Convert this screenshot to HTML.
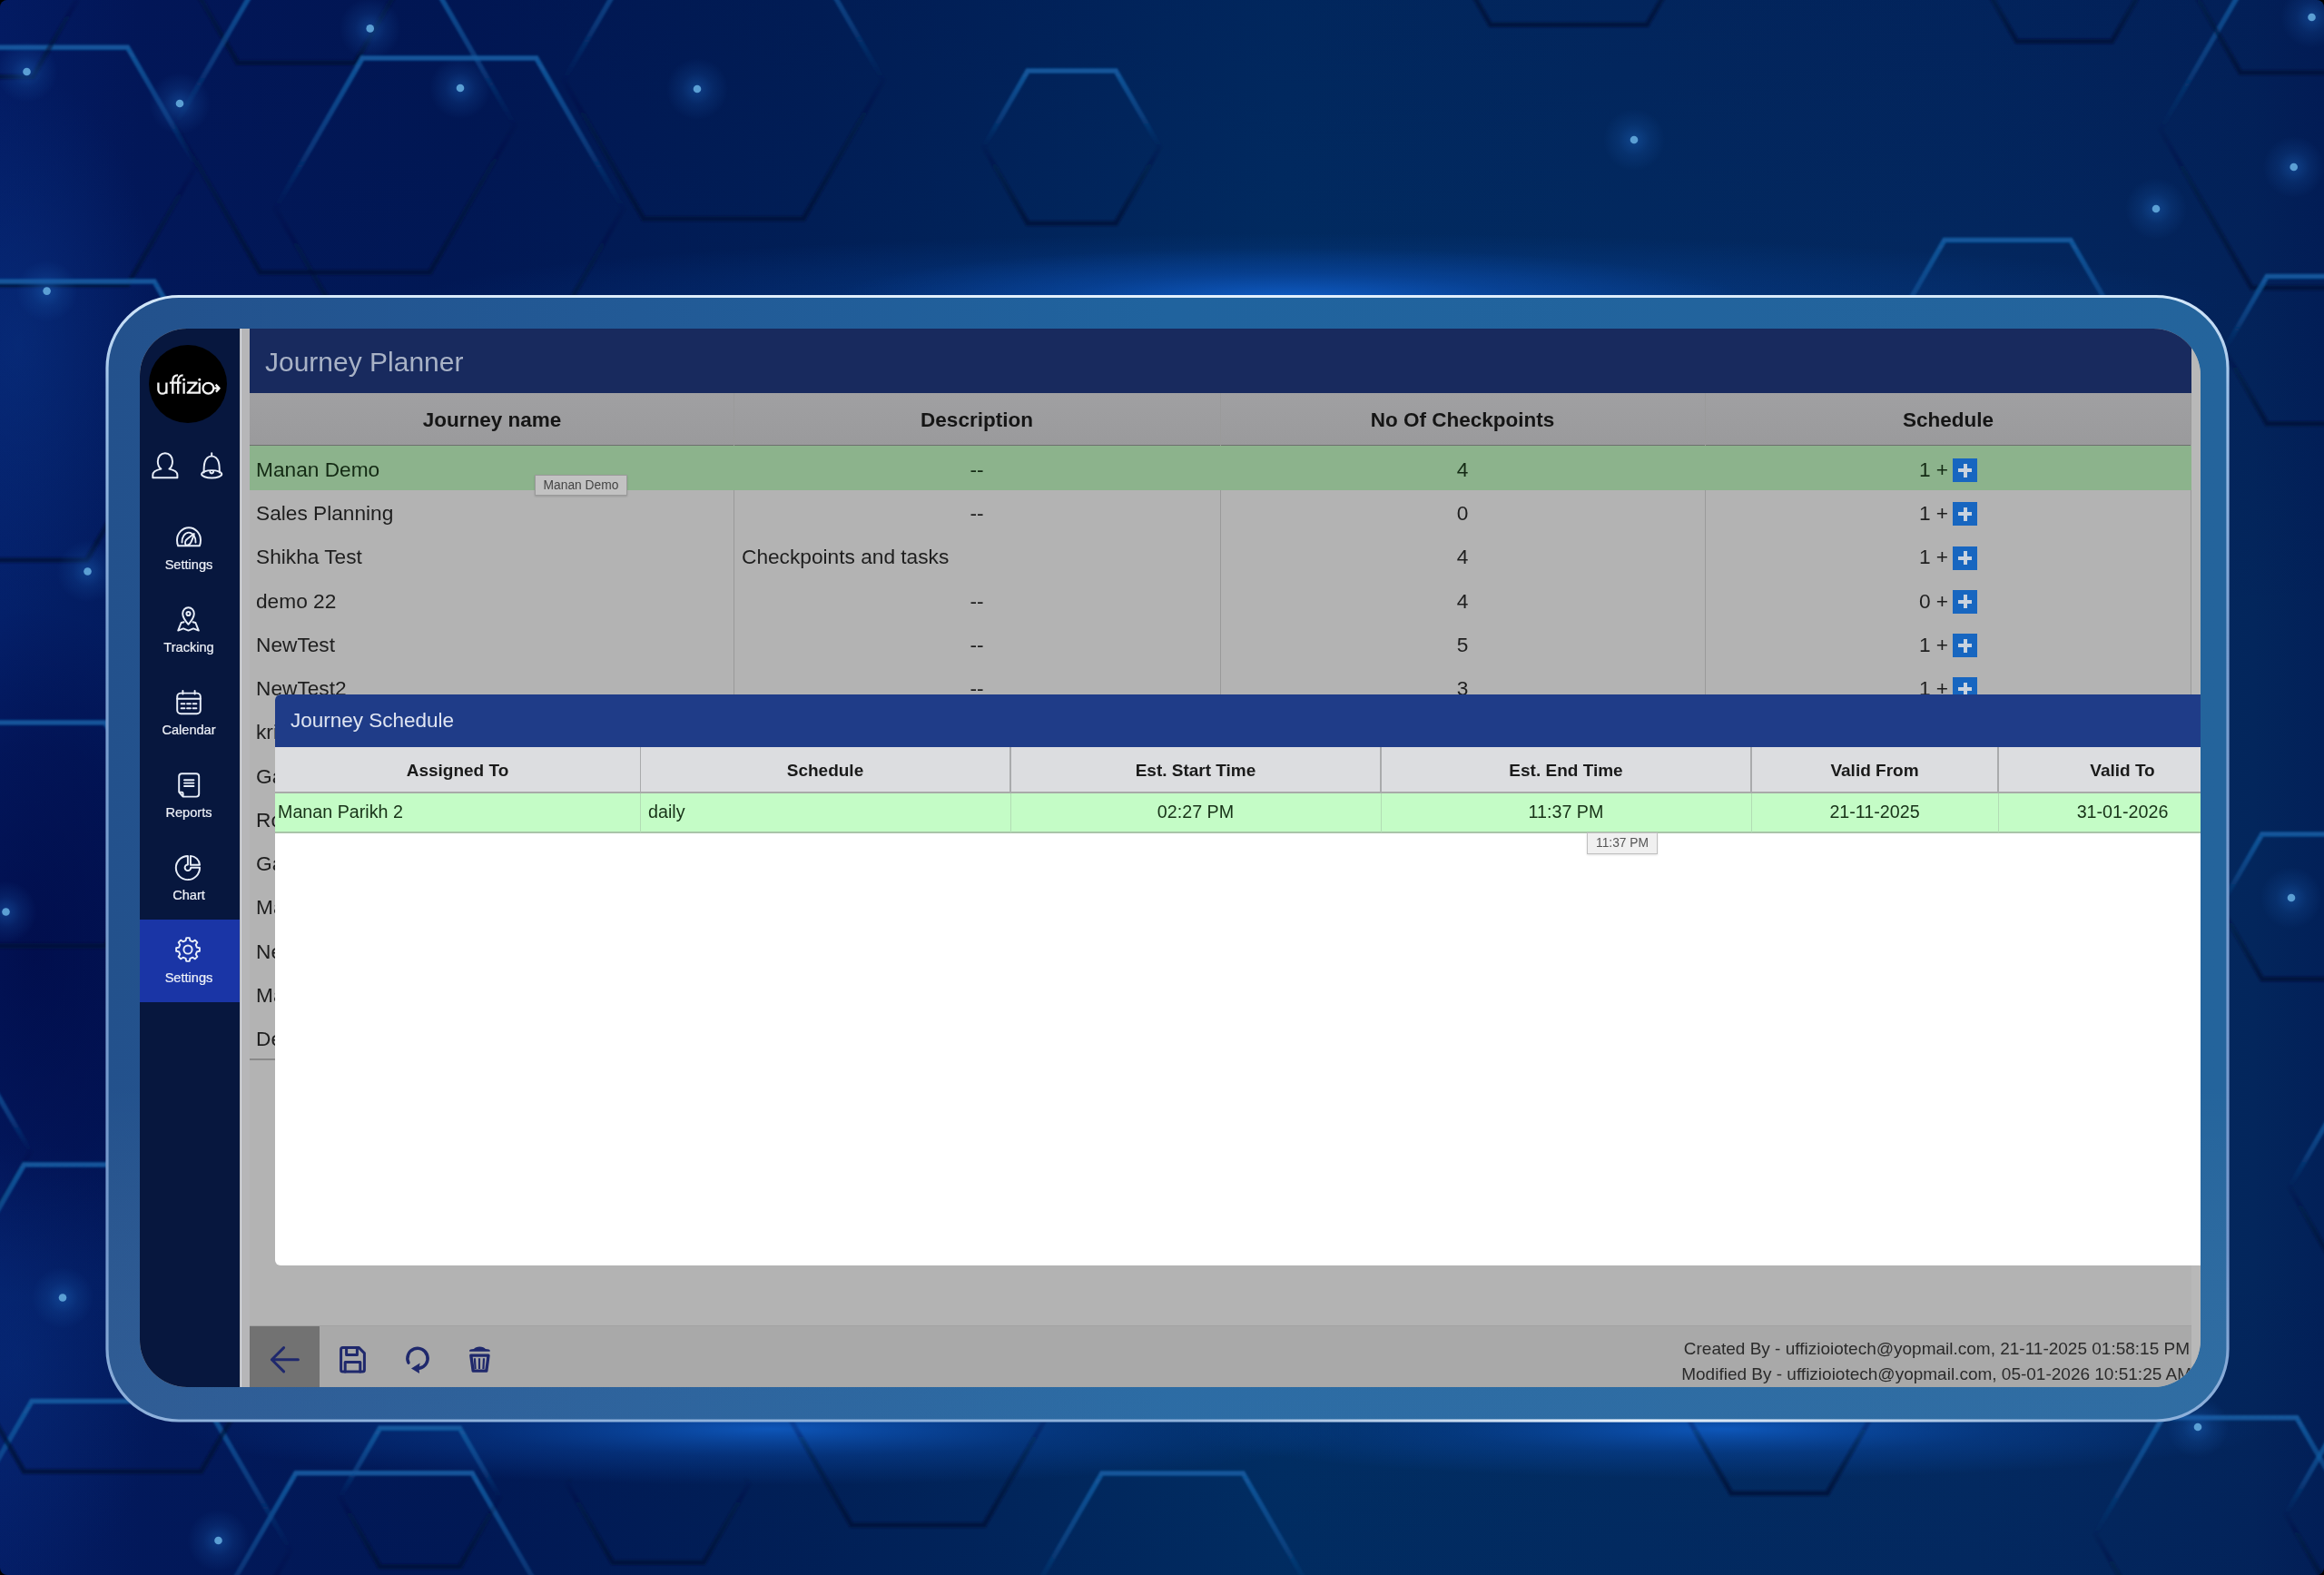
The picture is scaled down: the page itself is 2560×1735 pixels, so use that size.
<!DOCTYPE html>
<html><head><meta charset="utf-8"><title>Journey Planner</title>
<style>
html,body{margin:0;padding:0;width:2560px;height:1735px;overflow:hidden;background:#000;}
body{font-family:"Liberation Sans", sans-serif;position:relative;}
#page{position:absolute;left:0;top:0;width:2560px;height:1735px;overflow:hidden;border-radius:8px;}
.t{position:absolute;white-space:nowrap;line-height:1;will-change:transform;}
.r{position:absolute;}
</style></head><body><div id="page">
<svg width="2560" height="1735" viewBox="0 0 2560 1735" style="position:absolute;left:0;top:0">
<defs>
<linearGradient id="bgl" x1="0" y1="0" x2="1" y2="0">
  <stop offset="0" stop-color="#04206a"/>
  <stop offset="0.06" stop-color="#021a5c"/>
  <stop offset="0.2" stop-color="#011a56"/>
  <stop offset="0.35" stop-color="#012258"/>
  <stop offset="0.55" stop-color="#013064"/>
  <stop offset="0.85" stop-color="#032c62"/>
  <stop offset="0.97" stop-color="#03265c"/>
  <stop offset="1" stop-color="#022058"/>
</linearGradient>
<linearGradient id="bgv" x1="0" y1="0" x2="0" y2="1">
  <stop offset="0" stop-color="#000a48" stop-opacity="0.25"/>
  <stop offset="0.4" stop-color="#000a48" stop-opacity="0"/>
  <stop offset="0.8" stop-color="#000a48" stop-opacity="0"/>
  <stop offset="1" stop-color="#000a48" stop-opacity="0.12"/>
</linearGradient>
<radialGradient id="glowL" cx="0.5" cy="0.5" r="0.5">
  <stop offset="0" stop-color="#0c3f95" stop-opacity="0.35"/>
  <stop offset="1" stop-color="#0c3f95" stop-opacity="0"/>
</radialGradient>
<radialGradient id="darkL" cx="0.5" cy="0.5" r="0.5">
  <stop offset="0" stop-color="#000640" stop-opacity="0.65"/>
  <stop offset="0.6" stop-color="#000640" stop-opacity="0.4"/>
  <stop offset="1" stop-color="#000640" stop-opacity="0"/>
</radialGradient>
<radialGradient id="glowTop" cx="0.5" cy="0.5" r="0.5">
  <stop offset="0" stop-color="#0f5cc4" stop-opacity="0.95"/>
  <stop offset="0.5" stop-color="#0a4aa8" stop-opacity="0.45"/>
  <stop offset="1" stop-color="#0a4aa8" stop-opacity="0"/>
</radialGradient>
<radialGradient id="glowBot" cx="0.5" cy="0.5" r="0.5">
  <stop offset="0" stop-color="#0f5cc4" stop-opacity="0.9"/>
  <stop offset="0.5" stop-color="#0a4aa8" stop-opacity="0.4"/>
  <stop offset="1" stop-color="#0a4aa8" stop-opacity="0"/>
</radialGradient>
<linearGradient id="hexL" x1="0" y1="0" x2="0" y2="1">
  <stop offset="0" stop-color="#145ca2" stop-opacity="0.9"/>
  <stop offset="0.3" stop-color="#12569c" stop-opacity="0.5"/>
  <stop offset="0.5" stop-color="#0d3c7a" stop-opacity="0.0"/>
  <stop offset="1" stop-color="#0d3c7a" stop-opacity="0"/>
</linearGradient>
<linearGradient id="hexD" x1="0" y1="0" x2="0" y2="1">
  <stop offset="0" stop-color="#021338" stop-opacity="0"/>
  <stop offset="0.45" stop-color="#021338" stop-opacity="0"/>
  <stop offset="0.7" stop-color="#021338" stop-opacity="0.45"/>
  <stop offset="1" stop-color="#021338" stop-opacity="0.8"/>
</linearGradient>
<radialGradient id="dot" cx="0.5" cy="0.5" r="0.5">
  <stop offset="0" stop-color="#1a5cb0" stop-opacity="0.55"/>
  <stop offset="0.5" stop-color="#1a5cb0" stop-opacity="0.2"/>
  <stop offset="1" stop-color="#1a5cb0" stop-opacity="0"/>
</radialGradient>
</defs>
<rect width="2560" height="1735" fill="url(#bgl)"/>
<rect width="2560" height="1735" fill="url(#bgv)"/>
<ellipse cx="40" cy="1050" rx="220" ry="380" fill="url(#darkL)"/><ellipse cx="20" cy="380" rx="160" ry="300" fill="url(#glowL)"/><ellipse cx="20" cy="1500" rx="160" ry="250" fill="url(#glowL)" opacity="0.6"/>
<ellipse cx="1450" cy="332" rx="1000" ry="75" fill="url(#glowTop)" opacity="0.6"/><ellipse cx="1420" cy="328" rx="500" ry="55" fill="url(#glowTop)"/>
<ellipse cx="850" cy="1574" rx="650" ry="62" fill="url(#glowBot)"/><ellipse cx="1900" cy="1574" rx="600" ry="55" fill="url(#glowBot)"/>
<filter id="soft" x="-5%" y="-5%" width="110%" height="110%"><feGaussianBlur stdDeviation="0.8"/></filter>
<g filter="url(#soft)">
<polygon points="-10.5,52.2 140.5,52.2 216.0,183.0 140.5,313.8 -10.5,313.8 -86.0,183.0" fill="none" stroke="url(#hexD)" stroke-width="5.5"/>
<polygon points="-10.5,52.2 140.5,52.2 216.0,183.0 140.5,313.8 -10.5,313.8 -86.0,183.0" fill="none" stroke="url(#hexL)" stroke-width="5.5"/>
<polygon points="-64.0,-88.6 36.0,-88.6 86.0,-2.0 36.0,84.6 -64.0,84.6 -114.0,-2.0" fill="none" stroke="url(#hexD)" stroke-width="5.5"/>
<polygon points="-64.0,-88.6 36.0,-88.6 86.0,-2.0 36.0,84.6 -64.0,84.6 -114.0,-2.0" fill="none" stroke="url(#hexL)" stroke-width="5.5"/>
<polygon points="261.8,-155.2 391.2,-155.2 456.0,-43.0 391.2,69.2 261.8,69.2 197.0,-43.0" fill="none" stroke="url(#hexD)" stroke-width="5.5"/>
<polygon points="261.8,-155.2 391.2,-155.2 456.0,-43.0 391.2,69.2 261.8,69.2 197.0,-43.0" fill="none" stroke="url(#hexL)" stroke-width="5.5"/>
<polygon points="286.5,-23.9 473.5,-23.9 567.0,138.0 473.5,299.9 286.5,299.9 193.0,138.0" fill="none" stroke="url(#hexD)" stroke-width="5.5"/>
<polygon points="286.5,-23.9 473.5,-23.9 567.0,138.0 473.5,299.9 286.5,299.9 193.0,138.0" fill="none" stroke="url(#hexL)" stroke-width="5.5"/>
<polygon points="399.2,64.1 590.8,64.1 686.6,230.0 590.8,395.9 399.2,395.9 303.4,230.0" fill="none" stroke="url(#hexD)" stroke-width="5.5"/>
<polygon points="399.2,64.1 590.8,64.1 686.6,230.0 590.8,395.9 399.2,395.9 303.4,230.0" fill="none" stroke="url(#hexL)" stroke-width="5.5"/>
<polygon points="709.0,-63.8 885.0,-63.8 973.0,88.6 885.0,241.0 709.0,241.0 621.0,88.6" fill="none" stroke="url(#hexD)" stroke-width="5.5"/>
<polygon points="709.0,-63.8 885.0,-63.8 973.0,88.6 885.0,241.0 709.0,241.0 621.0,88.6" fill="none" stroke="url(#hexL)" stroke-width="5.5"/>
<polygon points="1132.1,78.0 1229.1,78.0 1277.6,162.0 1229.1,246.0 1132.1,246.0 1083.6,162.0" fill="none" stroke="url(#hexD)" stroke-width="5.5"/>
<polygon points="1132.1,78.0 1229.1,78.0 1277.6,162.0 1229.1,246.0 1132.1,246.0 1083.6,162.0" fill="none" stroke="url(#hexL)" stroke-width="5.5"/>
<polygon points="1641.8,-271.3 1814.2,-271.3 1900.4,-122.0 1814.2,27.3 1641.8,27.3 1555.6,-122.0" fill="none" stroke="url(#hexD)" stroke-width="5.5"/>
<polygon points="1641.8,-271.3 1814.2,-271.3 1900.4,-122.0 1814.2,27.3 1641.8,27.3 1555.6,-122.0" fill="none" stroke="url(#hexL)" stroke-width="5.5"/>
<polygon points="2221.7,-135.6 2326.3,-135.6 2378.6,-45.0 2326.3,45.6 2221.7,45.6 2169.4,-45.0" fill="none" stroke="url(#hexD)" stroke-width="5.5"/>
<polygon points="2221.7,-135.6 2326.3,-135.6 2378.6,-45.0 2326.3,45.6 2221.7,45.6 2169.4,-45.0" fill="none" stroke="url(#hexL)" stroke-width="5.5"/>
<polygon points="2141.9,264.6 2280.9,264.6 2350.4,385.0 2280.9,505.4 2141.9,505.4 2072.4,385.0" fill="none" stroke="url(#hexD)" stroke-width="5.5"/>
<polygon points="2141.9,264.6 2280.9,264.6 2350.4,385.0 2280.9,505.4 2141.9,505.4 2072.4,385.0" fill="none" stroke="url(#hexL)" stroke-width="5.5"/>
<polygon points="2480.5,-31.1 2681.5,-31.1 2782.0,143.0 2681.5,317.1 2480.5,317.1 2380.0,143.0" fill="none" stroke="url(#hexD)" stroke-width="5.5"/>
<polygon points="2480.5,-31.1 2681.5,-31.1 2782.0,143.0 2681.5,317.1 2480.5,317.1 2380.0,143.0" fill="none" stroke="url(#hexL)" stroke-width="5.5"/>
<polygon points="2468.0,-127.9 2588.0,-127.9 2648.0,-24.0 2588.0,79.9 2468.0,79.9 2408.0,-24.0" fill="none" stroke="url(#hexD)" stroke-width="5.5"/>
<polygon points="2468.0,-127.9 2588.0,-127.9 2648.0,-24.0 2588.0,79.9 2468.0,79.9 2408.0,-24.0" fill="none" stroke="url(#hexL)" stroke-width="5.5"/>
<polygon points="2497.2,304.5 2590.8,304.5 2637.6,385.6 2590.8,466.7 2497.2,466.7 2450.4,385.6" fill="none" stroke="url(#hexD)" stroke-width="5.5"/>
<polygon points="2497.2,304.5 2590.8,304.5 2637.6,385.6 2590.8,466.7 2497.2,466.7 2450.4,385.6" fill="none" stroke="url(#hexL)" stroke-width="5.5"/>
<polygon points="2491.8,919.0 2583.8,919.0 2629.8,998.7 2583.8,1078.4 2491.8,1078.4 2445.8,998.7" fill="none" stroke="url(#hexD)" stroke-width="5.5"/>
<polygon points="2491.8,919.0 2583.8,919.0 2629.8,998.7 2583.8,1078.4 2491.8,1078.4 2445.8,998.7" fill="none" stroke="url(#hexL)" stroke-width="5.5"/>
<polygon points="2572.0,1221.4 2672.0,1221.4 2722.0,1308.0 2672.0,1394.6 2572.0,1394.6 2522.0,1308.0" fill="none" stroke="url(#hexD)" stroke-width="5.5"/>
<polygon points="2572.0,1221.4 2672.0,1221.4 2722.0,1308.0 2672.0,1394.6 2572.0,1394.6 2522.0,1308.0" fill="none" stroke="url(#hexL)" stroke-width="5.5"/>
<polygon points="2382.0,1561.8 2530.0,1561.8 2604.0,1690.0 2530.0,1818.2 2382.0,1818.2 2308.0,1690.0" fill="none" stroke="url(#hexD)" stroke-width="5.5"/>
<polygon points="2382.0,1561.8 2530.0,1561.8 2604.0,1690.0 2530.0,1818.2 2382.0,1818.2 2308.0,1690.0" fill="none" stroke="url(#hexL)" stroke-width="5.5"/>
<polygon points="2568.0,1581.4 2668.0,1581.4 2718.0,1668.0 2668.0,1754.6 2568.0,1754.6 2518.0,1668.0" fill="none" stroke="url(#hexD)" stroke-width="5.5"/>
<polygon points="2568.0,1581.4 2668.0,1581.4 2718.0,1668.0 2668.0,1754.6 2568.0,1754.6 2518.0,1668.0" fill="none" stroke="url(#hexL)" stroke-width="5.5"/>
<polygon points="938.0,1427.2 1084.0,1427.2 1157.0,1553.6 1084.0,1680.0 938.0,1680.0 865.0,1553.6" fill="none" stroke="url(#hexD)" stroke-width="5.5"/>
<polygon points="938.0,1427.2 1084.0,1427.2 1157.0,1553.6 1084.0,1680.0 938.0,1680.0 865.0,1553.6" fill="none" stroke="url(#hexL)" stroke-width="5.5"/>
<polygon points="1213.8,1623.0 1369.2,1623.0 1446.9,1757.6 1369.2,1892.2 1213.8,1892.2 1136.1,1757.6" fill="none" stroke="url(#hexD)" stroke-width="5.5"/>
<polygon points="1213.8,1623.0 1369.2,1623.0 1446.9,1757.6 1369.2,1892.2 1213.8,1892.2 1136.1,1757.6" fill="none" stroke="url(#hexL)" stroke-width="5.5"/>
<polygon points="1907.2,1462.0 2012.8,1462.0 2065.7,1553.5 2012.8,1645.0 1907.2,1645.0 1854.3,1553.5" fill="none" stroke="url(#hexD)" stroke-width="5.5"/>
<polygon points="1907.2,1462.0 2012.8,1462.0 2065.7,1553.5 2012.8,1645.0 1907.2,1645.0 1854.3,1553.5" fill="none" stroke="url(#hexL)" stroke-width="5.5"/>
<polygon points="325.9,1622.7 520.1,1622.7 617.3,1791.0 520.1,1959.3 325.9,1959.3 228.7,1791.0" fill="none" stroke="url(#hexD)" stroke-width="5.5"/>
<polygon points="325.9,1622.7 520.1,1622.7 617.3,1791.0 520.1,1959.3 325.9,1959.3 228.7,1791.0" fill="none" stroke="url(#hexL)" stroke-width="5.5"/>
<polygon points="418.5,1573.3 506.5,1573.3 550.5,1649.5 506.5,1725.7 418.5,1725.7 374.5,1649.5" fill="none" stroke="url(#hexD)" stroke-width="5.5"/>
<polygon points="418.5,1573.3 506.5,1573.3 550.5,1649.5 506.5,1725.7 418.5,1725.7 374.5,1649.5" fill="none" stroke="url(#hexL)" stroke-width="5.5"/>
<polygon points="35.0,1543.5 225.0,1543.5 320.0,1708.0 225.0,1872.5 35.0,1872.5 -60.0,1708.0" fill="none" stroke="url(#hexD)" stroke-width="5.5"/>
<polygon points="35.0,1543.5 225.0,1543.5 320.0,1708.0 225.0,1872.5 35.0,1872.5 -60.0,1708.0" fill="none" stroke="url(#hexL)" stroke-width="5.5"/>
<polygon points="675.0,1548.1 775.0,1548.1 825.0,1634.7 775.0,1721.3 675.0,1721.3 625.0,1634.7" fill="none" stroke="url(#hexD)" stroke-width="5.5"/>
<polygon points="-8.5,309.9 169.9,309.9 259.1,464.4 169.9,618.9 -8.5,618.9 -97.7,464.4" fill="none" stroke="url(#hexL)" stroke-width="5.5"/>
<polygon points="-84.5,305.1 95.5,305.1 185.5,461.0 95.5,616.9 -84.5,616.9 -174.5,461.0" fill="none" stroke="url(#hexD)" stroke-width="5.5"/>
<polygon points="-26.2,796.0 115.8,796.0 186.8,919.0 115.8,1042.0 -26.2,1042.0 -97.2,919.0" fill="none" stroke="url(#hexD)" stroke-width="5.5"/>
<polygon points="-26.2,796.0 115.8,796.0 186.8,919.0 115.8,1042.0 -26.2,1042.0 -97.2,919.0" fill="none" stroke="url(#hexL)" stroke-width="5.5"/>
<polygon points="-116.5,1182.1 -16.5,1182.1 33.5,1268.7 -16.5,1355.3 -116.5,1355.3 -166.5,1268.7" fill="none" stroke="url(#hexD)" stroke-width="5.5"/>
<polygon points="-116.5,1182.1 -16.5,1182.1 33.5,1268.7 -16.5,1355.3 -116.5,1355.3 -166.5,1268.7" fill="none" stroke="url(#hexL)" stroke-width="5.5"/>
<polygon points="26.5,1283.1 221.5,1283.1 319.0,1452.0 221.5,1620.9 26.5,1620.9 -71.0,1452.0" fill="none" stroke="url(#hexD)" stroke-width="5.5"/>
<polygon points="26.5,1283.1 221.5,1283.1 319.0,1452.0 221.5,1620.9 26.5,1620.9 -71.0,1452.0" fill="none" stroke="url(#hexL)" stroke-width="5.5"/>
</g>
<circle cx="407.7" cy="31.4" r="34" fill="url(#dot)"/>
<circle cx="407.7" cy="31.4" r="4.3" fill="#5b9fd4"/>
<circle cx="507" cy="97" r="34" fill="url(#dot)"/>
<circle cx="507" cy="97" r="4.3" fill="#5b9fd4"/>
<circle cx="768" cy="98" r="34" fill="url(#dot)"/>
<circle cx="768" cy="98" r="4.3" fill="#5b9fd4"/>
<circle cx="198" cy="114" r="34" fill="url(#dot)"/>
<circle cx="198" cy="114" r="4.3" fill="#5b9fd4"/>
<circle cx="29.5" cy="79" r="34" fill="url(#dot)"/>
<circle cx="29.5" cy="79" r="4.3" fill="#5b9fd4"/>
<circle cx="1800" cy="154" r="34" fill="url(#dot)"/>
<circle cx="1800" cy="154" r="4.3" fill="#5b9fd4"/>
<circle cx="2375" cy="230" r="34" fill="url(#dot)"/>
<circle cx="2375" cy="230" r="4.3" fill="#5b9fd4"/>
<circle cx="2526.7" cy="184" r="34" fill="url(#dot)"/>
<circle cx="2526.7" cy="184" r="4.3" fill="#5b9fd4"/>
<circle cx="2546.5" cy="19" r="34" fill="url(#dot)"/>
<circle cx="2546.5" cy="19" r="4.3" fill="#5b9fd4"/>
<circle cx="51.6" cy="320.6" r="34" fill="url(#dot)"/>
<circle cx="51.6" cy="320.6" r="4.3" fill="#5b9fd4"/>
<circle cx="96.5" cy="629.5" r="34" fill="url(#dot)"/>
<circle cx="96.5" cy="629.5" r="4.3" fill="#5b9fd4"/>
<circle cx="6.5" cy="1004.5" r="34" fill="url(#dot)"/>
<circle cx="6.5" cy="1004.5" r="4.3" fill="#5b9fd4"/>
<circle cx="69" cy="1429.5" r="34" fill="url(#dot)"/>
<circle cx="69" cy="1429.5" r="4.3" fill="#5b9fd4"/>
<circle cx="240.5" cy="1697" r="34" fill="url(#dot)"/>
<circle cx="240.5" cy="1697" r="4.3" fill="#5b9fd4"/>
<circle cx="2421" cy="1572" r="34" fill="url(#dot)"/>
<circle cx="2421" cy="1572" r="4.3" fill="#5b9fd4"/>
<circle cx="2524" cy="989" r="34" fill="url(#dot)"/>
<circle cx="2524" cy="989" r="4.3" fill="#5b9fd4"/>
</svg>
<svg style="position:absolute;left:0;top:0" width="2560" height="1735">
<defs>
<linearGradient id="frameFill" x1="0" y1="0" x2="1" y2="0">
 <stop offset="0" stop-color="#23518c"/><stop offset="0.25" stop-color="#225a96"/><stop offset="0.5" stop-color="#20639e"/><stop offset="1" stop-color="#24649c"/>
</linearGradient>
<linearGradient id="frameV" x1="0" y1="0" x2="0" y2="1">
 <stop offset="0" stop-color="#3a90d0" stop-opacity="0.0"/><stop offset="0.7" stop-color="#ffffff" stop-opacity="0"/><stop offset="1" stop-color="#a0c0e0" stop-opacity="0.1"/>
</linearGradient>
<linearGradient id="hiB" x1="0" y1="0" x2="1" y2="0">
 <stop offset="0" stop-color="#ffffff" stop-opacity="0"/><stop offset="0.5" stop-color="#f0f8ff" stop-opacity="0.9"/><stop offset="1" stop-color="#ffffff" stop-opacity="0"/>
</linearGradient>
<linearGradient id="frameEdge" x1="0" y1="0" x2="0" y2="1">
 <stop offset="0" stop-color="#d4e8fa"/><stop offset="0.08" stop-color="#9cc0e8"/><stop offset="0.3" stop-color="#7a9fd0"/><stop offset="0.85" stop-color="#7498cc"/><stop offset="1" stop-color="#8fb2dc"/>
</linearGradient>
</defs>
<rect x="118.0" y="326.5" width="2336.0" height="1238.5" rx="79" ry="79" fill="url(#frameFill)" stroke="url(#frameEdge)" stroke-width="3.2"/>
<rect x="119.5" y="328" width="2333.0" height="1235.5" rx="77" ry="77" fill="url(#frameV)"/>
<rect x="1300" y="1563.5" width="1000" height="3" fill="url(#hiB)"/>
<rect x="300" y="325" width="1900" height="3" fill="url(#hiB)" opacity="0.6"/>
</svg>
<div id="screen" style="position:absolute;left:153.7px;top:361.5px;width:2270.8px;height:1166.5px;border-radius:52px;overflow:hidden;background:#b3b3b3;">
<div style="position:absolute;left:-153.7px;top:-361.5px;width:2560px;height:1735px;">
<div class="r" style="left:153.70px;top:361.50px;width:110.80px;height:1166.50px;background:#07173e;"></div>
<div class="r" style="left:264.50px;top:361.50px;width:10.50px;height:1166.50px;background:#b6b6b8;"></div>
<div class="r" style="left:264.60px;top:361.50px;width:1.60px;height:1166.50px;background:#d8dce6;"></div>
<div class="r" style="left:2414.00px;top:361.50px;width:10.50px;height:1166.50px;background:#b8b8b8;"></div>
<div class="r" style="left:275.00px;top:361.50px;width:2139.00px;height:71.50px;background:#182a5e;"></div>
<div class="t" style="left:292.20px;top:383.86px;font-size:30px;color:#a8b2c6;font-weight:400;">Journey Planner</div>
<div class="r" style="left:275.00px;top:433.00px;width:2139.00px;height:58.25px;background:linear-gradient(#a0a0a2,#9a9a9c);"></div>
<div class="r" style="left:275.00px;top:490.25px;width:2139.00px;height:1.25px;background:#6e706e;"></div>
<div class="r" style="left:807.90px;top:433.00px;width:1.20px;height:733.50px;background:#9a9a9a;"></div>
<div class="r" style="left:1343.65px;top:433.00px;width:1.20px;height:733.50px;background:#9a9a9a;"></div>
<div class="r" style="left:1877.90px;top:433.00px;width:1.20px;height:733.50px;background:#9a9a9a;"></div>
<div class="r" style="left:2413.20px;top:433.00px;width:1.00px;height:733.50px;background:#9a9a9a;"></div>
<div class="t" style="left:41.75px;width:1000px;text-align:center;top:451.70px;font-size:22.5px;color:#151515;font-weight:700;">Journey name</div>
<div class="t" style="left:576.38px;width:1000px;text-align:center;top:451.70px;font-size:22.5px;color:#151515;font-weight:700;">Description</div>
<div class="t" style="left:1111.38px;width:1000px;text-align:center;top:451.70px;font-size:22.5px;color:#151515;font-weight:700;">No Of Checkpoints</div>
<div class="t" style="left:1646.25px;width:1000px;text-align:center;top:451.70px;font-size:22.5px;color:#151515;font-weight:700;">Schedule</div>
<div class="r" style="left:275.00px;top:491.25px;width:2139.00px;height:48.75px;background:#8cb38c;"></div>
<div class="t" style="left:282.20px;top:505.78px;font-size:22.7px;color:#142a14;font-weight:400;">Manan Demo</div>
<div class="t" style="left:576.38px;width:1000px;text-align:center;top:505.78px;font-size:22.7px;color:#142a14;font-weight:400;">--</div>
<div class="t" style="left:1111.38px;width:1000px;text-align:center;top:505.78px;font-size:22.7px;color:#142a14;font-weight:400;">4</div>
<div class="t" style="left:2100.00px;width:60px;text-align:center;top:505.78px;font-size:22.7px;color:#142a14;font-weight:400;">1 +</div>
<div class="r" style="left:2151px;top:505.00px;width:27px;height:26px;background:#1766c0;"></div>
<div class="r" style="left:2157px;top:516.00px;width:15px;height:4px;background:#c9d3df;"></div>
<div class="r" style="left:2162.5px;top:510.50px;width:4px;height:15px;background:#c9d3df;"></div>
<div class="t" style="left:282.20px;top:554.03px;font-size:22.7px;color:#1e1e1e;font-weight:400;">Sales Planning</div>
<div class="t" style="left:576.38px;width:1000px;text-align:center;top:554.03px;font-size:22.7px;color:#1e1e1e;font-weight:400;">--</div>
<div class="t" style="left:1111.38px;width:1000px;text-align:center;top:554.03px;font-size:22.7px;color:#1e1e1e;font-weight:400;">0</div>
<div class="t" style="left:2100.00px;width:60px;text-align:center;top:554.03px;font-size:22.7px;color:#1e1e1e;font-weight:400;">1 +</div>
<div class="r" style="left:2151px;top:553.25px;width:27px;height:26px;background:#1766c0;"></div>
<div class="r" style="left:2157px;top:564.25px;width:15px;height:4px;background:#c9d3df;"></div>
<div class="r" style="left:2162.5px;top:558.75px;width:4px;height:15px;background:#c9d3df;"></div>
<div class="t" style="left:282.20px;top:602.28px;font-size:22.7px;color:#1e1e1e;font-weight:400;">Shikha Test</div>
<div class="t" style="left:817.20px;top:602.28px;font-size:22.7px;color:#1e1e1e;font-weight:400;">Checkpoints and tasks</div>
<div class="t" style="left:1111.38px;width:1000px;text-align:center;top:602.28px;font-size:22.7px;color:#1e1e1e;font-weight:400;">4</div>
<div class="t" style="left:2100.00px;width:60px;text-align:center;top:602.28px;font-size:22.7px;color:#1e1e1e;font-weight:400;">1 +</div>
<div class="r" style="left:2151px;top:601.50px;width:27px;height:26px;background:#1766c0;"></div>
<div class="r" style="left:2157px;top:612.50px;width:15px;height:4px;background:#c9d3df;"></div>
<div class="r" style="left:2162.5px;top:607.00px;width:4px;height:15px;background:#c9d3df;"></div>
<div class="t" style="left:282.20px;top:650.53px;font-size:22.7px;color:#1e1e1e;font-weight:400;">demo 22</div>
<div class="t" style="left:576.38px;width:1000px;text-align:center;top:650.53px;font-size:22.7px;color:#1e1e1e;font-weight:400;">--</div>
<div class="t" style="left:1111.38px;width:1000px;text-align:center;top:650.53px;font-size:22.7px;color:#1e1e1e;font-weight:400;">4</div>
<div class="t" style="left:2100.00px;width:60px;text-align:center;top:650.53px;font-size:22.7px;color:#1e1e1e;font-weight:400;">0 +</div>
<div class="r" style="left:2151px;top:649.75px;width:27px;height:26px;background:#1766c0;"></div>
<div class="r" style="left:2157px;top:660.75px;width:15px;height:4px;background:#c9d3df;"></div>
<div class="r" style="left:2162.5px;top:655.25px;width:4px;height:15px;background:#c9d3df;"></div>
<div class="t" style="left:282.20px;top:698.78px;font-size:22.7px;color:#1e1e1e;font-weight:400;">NewTest</div>
<div class="t" style="left:576.38px;width:1000px;text-align:center;top:698.78px;font-size:22.7px;color:#1e1e1e;font-weight:400;">--</div>
<div class="t" style="left:1111.38px;width:1000px;text-align:center;top:698.78px;font-size:22.7px;color:#1e1e1e;font-weight:400;">5</div>
<div class="t" style="left:2100.00px;width:60px;text-align:center;top:698.78px;font-size:22.7px;color:#1e1e1e;font-weight:400;">1 +</div>
<div class="r" style="left:2151px;top:698.00px;width:27px;height:26px;background:#1766c0;"></div>
<div class="r" style="left:2157px;top:709.00px;width:15px;height:4px;background:#c9d3df;"></div>
<div class="r" style="left:2162.5px;top:703.50px;width:4px;height:15px;background:#c9d3df;"></div>
<div class="t" style="left:282.20px;top:747.03px;font-size:22.7px;color:#1e1e1e;font-weight:400;">NewTest2</div>
<div class="t" style="left:576.38px;width:1000px;text-align:center;top:747.03px;font-size:22.7px;color:#1e1e1e;font-weight:400;">--</div>
<div class="t" style="left:1111.38px;width:1000px;text-align:center;top:747.03px;font-size:22.7px;color:#1e1e1e;font-weight:400;">3</div>
<div class="t" style="left:2100.00px;width:60px;text-align:center;top:747.03px;font-size:22.7px;color:#1e1e1e;font-weight:400;">1 +</div>
<div class="r" style="left:2151px;top:746.25px;width:27px;height:26px;background:#1766c0;"></div>
<div class="r" style="left:2157px;top:757.25px;width:15px;height:4px;background:#c9d3df;"></div>
<div class="r" style="left:2162.5px;top:751.75px;width:4px;height:15px;background:#c9d3df;"></div>
<div class="t" style="left:282.20px;top:795.28px;font-size:22.7px;color:#1e1e1e;font-weight:400;">krishna</div>
<div class="t" style="left:576.38px;width:1000px;text-align:center;top:795.28px;font-size:22.7px;color:#1e1e1e;font-weight:400;">--</div>
<div class="t" style="left:1111.38px;width:1000px;text-align:center;top:795.28px;font-size:22.7px;color:#1e1e1e;font-weight:400;">2</div>
<div class="t" style="left:2100.00px;width:60px;text-align:center;top:795.28px;font-size:22.7px;color:#1e1e1e;font-weight:400;">1 +</div>
<div class="r" style="left:2151px;top:794.50px;width:27px;height:26px;background:#1766c0;"></div>
<div class="r" style="left:2157px;top:805.50px;width:15px;height:4px;background:#c9d3df;"></div>
<div class="r" style="left:2162.5px;top:800.00px;width:4px;height:15px;background:#c9d3df;"></div>
<div class="t" style="left:282.20px;top:843.53px;font-size:22.7px;color:#1e1e1e;font-weight:400;">Gate Test</div>
<div class="t" style="left:576.38px;width:1000px;text-align:center;top:843.53px;font-size:22.7px;color:#1e1e1e;font-weight:400;">--</div>
<div class="t" style="left:1111.38px;width:1000px;text-align:center;top:843.53px;font-size:22.7px;color:#1e1e1e;font-weight:400;">3</div>
<div class="t" style="left:2100.00px;width:60px;text-align:center;top:843.53px;font-size:22.7px;color:#1e1e1e;font-weight:400;">1 +</div>
<div class="r" style="left:2151px;top:842.75px;width:27px;height:26px;background:#1766c0;"></div>
<div class="r" style="left:2157px;top:853.75px;width:15px;height:4px;background:#c9d3df;"></div>
<div class="r" style="left:2162.5px;top:848.25px;width:4px;height:15px;background:#c9d3df;"></div>
<div class="t" style="left:282.20px;top:891.78px;font-size:22.7px;color:#1e1e1e;font-weight:400;">Route 1</div>
<div class="t" style="left:576.38px;width:1000px;text-align:center;top:891.78px;font-size:22.7px;color:#1e1e1e;font-weight:400;">--</div>
<div class="t" style="left:1111.38px;width:1000px;text-align:center;top:891.78px;font-size:22.7px;color:#1e1e1e;font-weight:400;">4</div>
<div class="t" style="left:2100.00px;width:60px;text-align:center;top:891.78px;font-size:22.7px;color:#1e1e1e;font-weight:400;">1 +</div>
<div class="r" style="left:2151px;top:891.00px;width:27px;height:26px;background:#1766c0;"></div>
<div class="r" style="left:2157px;top:902.00px;width:15px;height:4px;background:#c9d3df;"></div>
<div class="r" style="left:2162.5px;top:896.50px;width:4px;height:15px;background:#c9d3df;"></div>
<div class="t" style="left:282.20px;top:940.03px;font-size:22.7px;color:#1e1e1e;font-weight:400;">Gandhinagar</div>
<div class="t" style="left:576.38px;width:1000px;text-align:center;top:940.03px;font-size:22.7px;color:#1e1e1e;font-weight:400;">--</div>
<div class="t" style="left:1111.38px;width:1000px;text-align:center;top:940.03px;font-size:22.7px;color:#1e1e1e;font-weight:400;">2</div>
<div class="t" style="left:2100.00px;width:60px;text-align:center;top:940.03px;font-size:22.7px;color:#1e1e1e;font-weight:400;">1 +</div>
<div class="r" style="left:2151px;top:939.25px;width:27px;height:26px;background:#1766c0;"></div>
<div class="r" style="left:2157px;top:950.25px;width:15px;height:4px;background:#c9d3df;"></div>
<div class="r" style="left:2162.5px;top:944.75px;width:4px;height:15px;background:#c9d3df;"></div>
<div class="t" style="left:282.20px;top:988.28px;font-size:22.7px;color:#1e1e1e;font-weight:400;">Manan 2</div>
<div class="t" style="left:576.38px;width:1000px;text-align:center;top:988.28px;font-size:22.7px;color:#1e1e1e;font-weight:400;">--</div>
<div class="t" style="left:1111.38px;width:1000px;text-align:center;top:988.28px;font-size:22.7px;color:#1e1e1e;font-weight:400;">3</div>
<div class="t" style="left:2100.00px;width:60px;text-align:center;top:988.28px;font-size:22.7px;color:#1e1e1e;font-weight:400;">1 +</div>
<div class="r" style="left:2151px;top:987.50px;width:27px;height:26px;background:#1766c0;"></div>
<div class="r" style="left:2157px;top:998.50px;width:15px;height:4px;background:#c9d3df;"></div>
<div class="r" style="left:2162.5px;top:993.00px;width:4px;height:15px;background:#c9d3df;"></div>
<div class="t" style="left:282.20px;top:1036.53px;font-size:22.7px;color:#1e1e1e;font-weight:400;">New Journey</div>
<div class="t" style="left:576.38px;width:1000px;text-align:center;top:1036.53px;font-size:22.7px;color:#1e1e1e;font-weight:400;">--</div>
<div class="t" style="left:1111.38px;width:1000px;text-align:center;top:1036.53px;font-size:22.7px;color:#1e1e1e;font-weight:400;">4</div>
<div class="t" style="left:2100.00px;width:60px;text-align:center;top:1036.53px;font-size:22.7px;color:#1e1e1e;font-weight:400;">1 +</div>
<div class="r" style="left:2151px;top:1035.75px;width:27px;height:26px;background:#1766c0;"></div>
<div class="r" style="left:2157px;top:1046.75px;width:15px;height:4px;background:#c9d3df;"></div>
<div class="r" style="left:2162.5px;top:1041.25px;width:4px;height:15px;background:#c9d3df;"></div>
<div class="t" style="left:282.20px;top:1084.78px;font-size:22.7px;color:#1e1e1e;font-weight:400;">Manan 3</div>
<div class="t" style="left:576.38px;width:1000px;text-align:center;top:1084.78px;font-size:22.7px;color:#1e1e1e;font-weight:400;">--</div>
<div class="t" style="left:1111.38px;width:1000px;text-align:center;top:1084.78px;font-size:22.7px;color:#1e1e1e;font-weight:400;">2</div>
<div class="t" style="left:2100.00px;width:60px;text-align:center;top:1084.78px;font-size:22.7px;color:#1e1e1e;font-weight:400;">1 +</div>
<div class="r" style="left:2151px;top:1084.00px;width:27px;height:26px;background:#1766c0;"></div>
<div class="r" style="left:2157px;top:1095.00px;width:15px;height:4px;background:#c9d3df;"></div>
<div class="r" style="left:2162.5px;top:1089.50px;width:4px;height:15px;background:#c9d3df;"></div>
<div class="t" style="left:282.20px;top:1133.03px;font-size:22.7px;color:#1e1e1e;font-weight:400;">Demo</div>
<div class="t" style="left:576.38px;width:1000px;text-align:center;top:1133.03px;font-size:22.7px;color:#1e1e1e;font-weight:400;">--</div>
<div class="t" style="left:1111.38px;width:1000px;text-align:center;top:1133.03px;font-size:22.7px;color:#1e1e1e;font-weight:400;">3</div>
<div class="t" style="left:2100.00px;width:60px;text-align:center;top:1133.03px;font-size:22.7px;color:#1e1e1e;font-weight:400;">1 +</div>
<div class="r" style="left:2151px;top:1132.25px;width:27px;height:26px;background:#1766c0;"></div>
<div class="r" style="left:2157px;top:1143.25px;width:15px;height:4px;background:#c9d3df;"></div>
<div class="r" style="left:2162.5px;top:1137.75px;width:4px;height:15px;background:#c9d3df;"></div>
<div class="r" style="left:275.00px;top:1166.00px;width:2139.00px;height:1.50px;background:#8a8a8a;"></div>
<div class="r" style="left:588.75px;top:523px;width:102px;height:23.25px;background:#c2c2c2;border:1px solid #9a9a9a;box-sizing:border-box;box-shadow:0 1px 2px rgba(0,0,0,0.15);"></div>
<div class="t" style="left:588.75px;width:102px;text-align:center;top:528.32px;font-size:13.8px;color:#444;font-weight:400;">Manan Demo</div>
<div class="r" style="left:275.00px;top:1461.00px;width:2139.00px;height:67.00px;background:#a9a9a9;"></div>
<div class="r" style="left:275.00px;top:1460.00px;width:2139.00px;height:1.20px;background:#a2a2a2;"></div>
<div class="r" style="left:275.00px;top:1461.00px;width:76.70px;height:67.00px;background:#727272;"></div>
<div class="t" style="left:1212.00px;width:1200px;text-align:right;top:1476.22px;font-size:19px;color:#2a2a2a;font-weight:400;">Created By - uffizioiotech@yopmail.com, 21-11-2025 01:58:15 PM</div>
<div class="t" style="left:1214.00px;width:1200px;text-align:right;top:1504.12px;font-size:19px;color:#2a2a2a;font-weight:400;">Modified By - uffizioiotech@yopmail.com, 05-01-2026 10:51:25 AM</div>
<div class="r" style="left:164.3px;top:380px;width:86px;height:86px;border-radius:50%;background:#000;"></div>
<svg style="position:absolute;left:0;top:0;overflow:visible" width="2560" height="1735"><g fill="none" stroke="#f4f4f4" stroke-width="2.3" stroke-linecap="butt" stroke-linejoin="round"><path d="M174.4 421.6 V429.2 A4.5 4.5 0 0 0 183.4 429.2 V421.6 M183.4 427 V433.8"/><path d="M190.3 433.8 V419.5 C190.3 415.6 192.6 413.4 196.0 413.4"/><path d="M196.2 433.8 V419.5 C196.2 415.6 198.5 413.4 201.6 413.4"/><path d="M202.6 421.6 V433.8 M186.8 421.6 H199.6"/><path d="M206.2 421.7 H216.6 L206.6 432.7 H220.2 M219.8 421.6 V433.8"/><circle cx="229.4" cy="427.7" r="5.9"/><path d="M235.3 427.7 H241.2 M237.6 423.6 L241.6 427.7 L237.9 431.6"/></g><g fill="#f4f4f4"><circle cx="202.6" cy="418.2" r="1.45"/><circle cx="219.8" cy="418.2" r="1.45"/></g></svg>
<svg style="position:absolute;left:167.2px;top:497.9px;overflow:visible;" width="30" height="29.5" viewBox="0 0 30 29.5"><path fill="none" stroke="#e8eef9" stroke-width="1.95" stroke-linejoin="round" stroke-linecap="round" d="M1.3 28.3 H28.4 V25.2 C28.4 21.4 24.6 19.6 19.4 18.6 C21.9 16.6 23.0 13.8 23.0 10.2 C23.0 5.0 19.5 1.2 14.9 1.2 C10.3 1.2 6.8 5.0 6.8 10.2 C6.8 13.8 7.9 16.6 10.4 18.6 C5.2 19.6 1.3 21.4 1.3 25.2 Z"/></svg>
<svg style="position:absolute;left:221px;top:497.9px;overflow:visible;" width="25" height="29.5" viewBox="0 0 25 29.5"><path fill="none" stroke="#e8eef9" stroke-width="1.95" stroke-linejoin="round" stroke-linecap="round" d="M12.2 1.2 V4.2 M3.6 22.5 C3.6 16 3.2 5.2 12.2 4.4 C21.2 5.2 20.8 16 20.8 22.5"/><ellipse fill="none" stroke="#e8eef9" stroke-width="1.95" stroke-linejoin="round" stroke-linecap="round" cx="12.2" cy="24.3" rx="11.1" ry="4.2"/><path fill="none" stroke="#e8eef9" stroke-width="1.95" stroke-linejoin="round" stroke-linecap="round" d="M10.4 21.6 A1.8 1.8 0 0 0 14 21.6"/></svg>
<svg style="position:absolute;left:193.7px;top:579.8px;overflow:visible;" width="28" height="22.5" viewBox="0 0 28 22.5"><path fill="none" stroke="#e8eef9" stroke-width="1.95" stroke-linejoin="round" stroke-linecap="round" d="M2.2 21.3 H25.8 C26.6 19.5 27 17.3 27 15 C27 7.6 21.2 1.2 14 1.2 C6.8 1.2 1 7.6 1 15 C1 17.3 1.4 19.5 2.2 21.3 Z"/><path fill="none" stroke="#e8eef9" stroke-width="1.95" stroke-linejoin="round" stroke-linecap="round" d="M6.5 17.5 C6.2 11.5 9.8 6.6 14 6.6 C18.2 6.6 21.8 11.5 21.5 17.5"/><path fill="none" stroke="#e8eef9" stroke-width="1.95" stroke-linejoin="round" stroke-linecap="round" d="M10.6 20.2 C9.4 18.2 10.2 15.4 12.2 13.8 C14.6 11.8 18.0 9.2 19.8 8.0 C19.2 10.2 17.8 14.6 16.4 17.4 C15.2 19.8 12.4 21.6 10.6 20.2 Z"/></svg>
<svg style="position:absolute;left:195px;top:668px;overflow:visible;" width="25" height="28" viewBox="0 0 25 28"><path fill="none" stroke="#e8eef9" stroke-width="1.95" stroke-linejoin="round" stroke-linecap="round" d="M12.5 19.8 C9.5 16.4 6.2 12.6 6.2 8.0 C6.2 4.2 9.0 1.2 12.5 1.2 C16.0 1.2 18.8 4.2 18.8 8.0 C18.8 12.6 15.5 16.4 12.5 19.8 Z"/><circle fill="none" stroke="#e8eef9" stroke-width="1.95" stroke-linejoin="round" stroke-linecap="round" cx="12.5" cy="8" r="2.1"/><path fill="none" stroke="#e8eef9" stroke-width="1.95" stroke-linejoin="round" stroke-linecap="round" d="M7.5 17.2 L4.6 18.0 L1.2 26.6 L7.0 24.4 L12.5 26.6 L18.0 24.4 L23.8 26.6 L20.4 18.0 L17.5 17.2"/></svg>
<svg style="position:absolute;left:193.7px;top:759.8px;overflow:visible;" width="28" height="27.5" viewBox="0 0 28 27.5"><rect fill="none" stroke="#e8eef9" stroke-width="1.95" stroke-linejoin="round" stroke-linecap="round" x="1.2" y="3.6" width="25.6" height="22.7" rx="4"/><path fill="none" stroke="#e8eef9" stroke-width="1.95" stroke-linejoin="round" stroke-linecap="round" d="M7.4 1 V4.5 M20.6 1 V4.5 M1.2 9.8 H26.8"/><path fill="none" stroke="#e8eef9" stroke-width="1.95" stroke-linejoin="round" stroke-linecap="round" d="M5.6 15.2 H9.4 M12.1 15.2 H15.9 M18.6 15.2 H22.4 M5.6 20.2 H9.4 M12.1 20.2 H15.9 M18.6 20.2 H22.4"/></svg>
<svg style="position:absolute;left:195.7px;top:850.5px;overflow:visible;" width="24.5" height="28" viewBox="0 0 24.5 28"><path fill="none" stroke="#e8eef9" stroke-width="1.95" stroke-linejoin="round" stroke-linecap="round" d="M5.6 26.6 H20.2 C21.9 26.6 23.2 25.3 23.2 23.6 V4.2 C23.2 2.5 21.9 1.2 20.2 1.2 H4.2 C2.5 1.2 1.2 2.5 1.2 4.2 V21.6 Z M1.2 21.6 H4.2 C5.1 21.6 5.6 22.2 5.6 23.0 V26.6"/><path fill="none" stroke="#e8eef9" stroke-width="1.95" stroke-linejoin="round" stroke-linecap="round" d="M7 8.2 H17.4 M7 11.6 H17.4 M7 15.0 H17.4"/></svg>
<svg style="position:absolute;left:193.4px;top:941.9px;overflow:visible;" width="28" height="28" viewBox="0 0 28 28"><path fill="none" stroke="#e8eef9" stroke-width="1.95" stroke-linejoin="round" stroke-linecap="round" d="M13.9 0.9 V10.5 A3.3 3.3 0 1 0 17.2 13.8 H27.0 A13.1 13.1 0 1 1 13.9 0.9 Z"/><path fill="none" stroke="#e8eef9" stroke-width="1.95" stroke-linejoin="round" stroke-linecap="round" d="M16.9 0.9 V10.7 H27.0 A10.6 10.6 0 0 0 16.9 0.9 Z"/></svg>
<div class="r" style="left:153.7px;top:1013.3px;width:110.8px;height:91px;background:#1a35a6;"></div>
<svg style="position:absolute;left:193.4px;top:1032.4px;overflow:visible;" width="28" height="28" viewBox="0 0 28 28"><path fill="none" stroke="#e8eef9" stroke-width="1.95" stroke-linejoin="round" stroke-linecap="round" d="M11.62 4.08 L12.27 1.12 L15.73 1.12 L16.38 4.08 L19.33 5.30 L21.89 3.67 L24.33 6.11 L22.70 8.67 L23.92 11.62 L26.88 12.27 L26.88 15.73 L23.92 16.38 L22.70 19.33 L24.33 21.89 L21.89 24.33 L19.33 22.70 L16.38 23.92 L15.73 26.88 L12.27 26.88 L11.62 23.92 L8.67 22.70 L6.11 24.33 L3.67 21.89 L5.30 19.33 L4.08 16.38 L1.12 15.73 L1.12 12.27 L4.08 11.62 L5.30 8.67 L3.67 6.11 L6.11 3.67 L8.67 5.30 Z"/><circle fill="none" stroke="#e8eef9" stroke-width="1.95" stroke-linejoin="round" stroke-linecap="round" cx="14" cy="14" r="4.6"/></svg>
<div class="t" style="left:152.60px;width:110px;text-align:center;top:614.64px;font-size:14.6px;color:#eef1f8;font-weight:400;-webkit-text-stroke:0.2px #eef1f8;">Settings</div>
<div class="t" style="left:152.60px;width:110px;text-align:center;top:705.74px;font-size:14.6px;color:#eef1f8;font-weight:400;-webkit-text-stroke:0.2px #eef1f8;">Tracking</div>
<div class="t" style="left:152.60px;width:110px;text-align:center;top:796.84px;font-size:14.6px;color:#eef1f8;font-weight:400;-webkit-text-stroke:0.2px #eef1f8;">Calendar</div>
<div class="t" style="left:152.60px;width:110px;text-align:center;top:887.94px;font-size:14.6px;color:#eef1f8;font-weight:400;-webkit-text-stroke:0.2px #eef1f8;">Reports</div>
<div class="t" style="left:152.60px;width:110px;text-align:center;top:979.04px;font-size:14.6px;color:#eef1f8;font-weight:400;-webkit-text-stroke:0.2px #eef1f8;">Chart</div>
<div class="t" style="left:152.60px;width:110px;text-align:center;top:1070.14px;font-size:14.6px;color:#eef1f8;font-weight:400;-webkit-text-stroke:0.2px #eef1f8;">Settings</div>
<svg style="position:absolute;left:296.5px;top:1483.3px;overflow:visible;" width="33" height="29.5" viewBox="0 0 33 29.5"><path fill="none" stroke="#1f286c" stroke-width="3" stroke-linejoin="round" stroke-linecap="round" d="M31.4 14.7 H2.4 M15.6 1.6 L2.4 14.7 L15.6 27.9"/></svg>
<svg style="position:absolute;left:374px;top:1483.3px;overflow:visible;" width="29" height="29.5" viewBox="0 0 29 29.5"><path fill="none" stroke="#1f286c" stroke-width="3" stroke-linejoin="round" stroke-linecap="round" d="M3.6 1.6 H21.4 L27.4 7.6 V25.9 C27.4 27.0 26.5 27.9 25.4 27.9 H3.6 C2.5 27.9 1.6 27.0 1.6 25.9 V3.6 C1.6 2.5 2.5 1.6 3.6 1.6 Z"/><path fill="none" stroke="#1f286c" stroke-width="3" stroke-linejoin="round" stroke-linecap="round" d="M7.6 1.6 V9.6 H19.4 V1.6 M6.2 27.9 V17.4 H22.8 V27.9"/></svg>
<svg style="position:absolute;left:446.5px;top:1483px;overflow:visible;" width="26.5" height="29.5" viewBox="0 0 26.5 29.5"><path fill="none" stroke="#1f286c" stroke-width="3.5" stroke-linejoin="round" stroke-linecap="round" d="M2.94 18.09 A11.1 11.1 0 1 1 14.93 24.33"/><path fill="#1f286c" d="M6.0 24.4 L15.6 18.6 L14.6 24.6 L15.0 30.0 Z"/></svg>
<svg style="position:absolute;left:515.9px;top:1483px;overflow:visible;" width="25" height="29.5" viewBox="0 0 25 29.5"><path fill="#1f286c" d="M1.1 5.7 H23.7 V4.6 C23.7 3.7 21.8 3.3 18.8 3.1 C17.8 1.3 15.4 0.4 12.4 0.4 C9.4 0.4 7.0 1.3 6.0 3.1 C3.0 3.3 1.1 3.7 1.1 4.6 Z"/><path fill="none" stroke="#1f286c" stroke-width="3.3" stroke-linejoin="round" d="M2.8 10.2 H22.0 L19.8 27.2 H5.2 Z"/><path fill="none" stroke="#1f286c" stroke-width="2.2" stroke-linecap="butt" d="M6.9 13.3 L7.6 25 M12.0 13.3 V25 M17.0 13.3 L16.4 25"/></svg>
<div class="r" style="left:303px;top:765px;width:2137px;height:629px;background:#ffffff;border-radius:6px;overflow:hidden;">
</div>
<div class="r" style="left:303.00px;top:765.00px;width:2137.00px;height:57.50px;background:#1f3c88;border-top-left-radius:6px;"></div>
<div class="t" style="left:320.20px;top:782.95px;font-size:22.5px;color:#dfe5f2;font-weight:400;">Journey Schedule</div>
<div class="r" style="left:303.00px;top:822.50px;width:2137.00px;height:50.50px;background:#dcdde0;"></div>
<div class="r" style="left:303.00px;top:872.00px;width:2137.00px;height:1.50px;background:#a8aaa8;"></div>
<div class="r" style="left:303.00px;top:873.50px;width:2137.00px;height:43.00px;background:#c4fcc6;"></div>
<div class="r" style="left:303.00px;top:916.00px;width:2137.00px;height:1.50px;background:#a9c4a9;"></div>
<div class="r" style="left:704.90px;top:822.50px;width:1.20px;height:50.50px;background:#a9aaac;"></div>
<div class="r" style="left:705.00px;top:873.50px;width:1.00px;height:43.00px;background:#b2dcb4;"></div>
<div class="r" style="left:1112.40px;top:822.50px;width:1.20px;height:50.50px;background:#a9aaac;"></div>
<div class="r" style="left:1112.50px;top:873.50px;width:1.00px;height:43.00px;background:#b2dcb4;"></div>
<div class="r" style="left:1520.40px;top:822.50px;width:1.20px;height:50.50px;background:#a9aaac;"></div>
<div class="r" style="left:1520.50px;top:873.50px;width:1.00px;height:43.00px;background:#b2dcb4;"></div>
<div class="r" style="left:1928.40px;top:822.50px;width:1.20px;height:50.50px;background:#a9aaac;"></div>
<div class="r" style="left:1928.50px;top:873.50px;width:1.00px;height:43.00px;background:#b2dcb4;"></div>
<div class="r" style="left:2200.40px;top:822.50px;width:1.20px;height:50.50px;background:#a9aaac;"></div>
<div class="r" style="left:2200.50px;top:873.50px;width:1.00px;height:43.00px;background:#b2dcb4;"></div>
<div class="t" style="left:4.25px;width:1000px;text-align:center;top:839.42px;font-size:19px;color:#1a1a1a;font-weight:700;">Assigned To</div>
<div class="t" style="left:409.25px;width:1000px;text-align:center;top:839.42px;font-size:19px;color:#1a1a1a;font-weight:700;">Schedule</div>
<div class="t" style="left:817.00px;width:1000px;text-align:center;top:839.42px;font-size:19px;color:#1a1a1a;font-weight:700;">Est. Start Time</div>
<div class="t" style="left:1225.00px;width:1000px;text-align:center;top:839.42px;font-size:19px;color:#1a1a1a;font-weight:700;">Est. End Time</div>
<div class="t" style="left:1565.00px;width:1000px;text-align:center;top:839.42px;font-size:19px;color:#1a1a1a;font-weight:700;">Valid From</div>
<div class="t" style="left:1837.50px;width:1000px;text-align:center;top:839.42px;font-size:19px;color:#1a1a1a;font-weight:700;">Valid To</div>
<div class="t" style="left:305.80px;top:885.32px;font-size:19.7px;color:#173217;font-weight:400;">Manan Parikh 2</div>
<div class="t" style="left:713.50px;top:885.32px;font-size:19.7px;color:#173217;font-weight:400;">daily</div>
<div class="t" style="left:817.00px;width:1000px;text-align:center;top:885.32px;font-size:19.7px;color:#173217;font-weight:400;">02:27 PM</div>
<div class="t" style="left:1225.00px;width:1000px;text-align:center;top:885.32px;font-size:19.7px;color:#173217;font-weight:400;">11:37 PM</div>
<div class="t" style="left:1565.00px;width:1000px;text-align:center;top:885.32px;font-size:19.7px;color:#173217;font-weight:400;">21-11-2025</div>
<div class="t" style="left:1837.50px;width:1000px;text-align:center;top:885.32px;font-size:19.7px;color:#173217;font-weight:400;">31-01-2026</div>
<div class="r" style="left:1748px;top:916.6px;width:78.3px;height:24.2px;background:#f0f0f0;border:1px solid #c0c0c0;box-sizing:border-box;box-shadow:0 1px 2px rgba(0,0,0,0.12);"></div>
<div class="t" style="left:1748.10px;width:78px;text-align:center;top:922.32px;font-size:13.8px;color:#555;font-weight:400;">11:37 PM</div>
</div></div>
</div></body></html>
